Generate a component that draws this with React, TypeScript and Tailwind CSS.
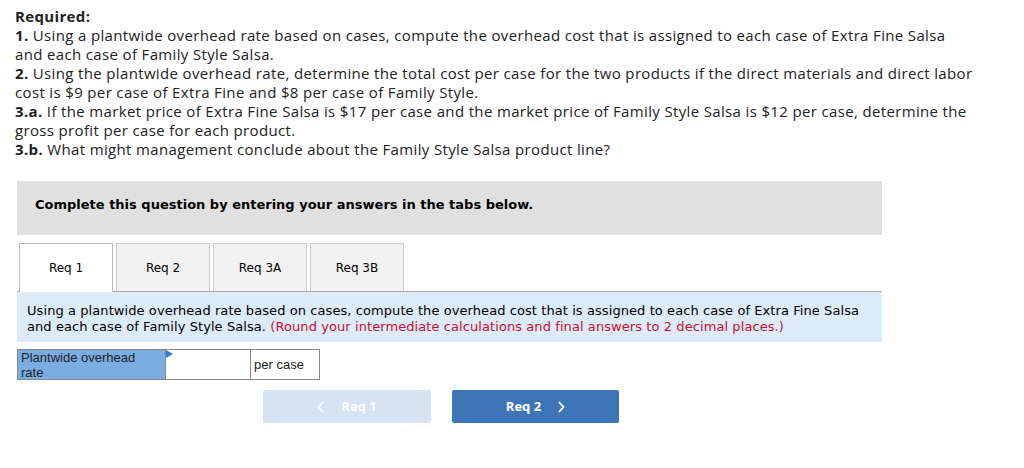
import React from "react";

const QUESTION_FONT = { fontFamily: '"Open Sans", "Liberation Sans", sans-serif' };
const VERDANA = { fontFamily: '"DejaVu Sans", Verdana, sans-serif' };
const ARIAL = { fontFamily: '"Liberation Sans", Arial, sans-serif' };

const TABS = ["Req 1", "Req 2", "Req 3A", "Req 3B"];

export default function App() {
  return (
    <div className="w-[1024px] h-[468px] bg-white text-[#222]">
      <div className="pl-[15px] pt-[7px] w-[1010px] text-[15px] leading-[19px] tracking-[0.35px]" style={QUESTION_FONT}>
        <p className="font-bold">Required:</p>
        <p>
          <b>1.</b> Using a plantwide overhead rate based on cases, compute the overhead cost that is assigned to each case of Extra Fine Salsa
          <br />
          and each case of Family Style Salsa.
        </p>
        <p>
          <b>2.</b> Using the plantwide overhead rate, determine the total cost per case for the two products if the direct materials and direct labor
          <br />
          cost is $9 per case of Extra Fine and $8 per case of Family Style.
        </p>
        <p>
          <b>3.a.</b> If the market price of Extra Fine Salsa is $17 per case and the market price of Family Style Salsa is $12 per case, determine the
          <br />
          gross profit per case for each product.
        </p>
        <p>
          <b>3.b.</b> What might management conclude about the Family Style Salsa product line?
        </p>
      </div>

      <div className="ml-[17px] mt-[22px] w-[865px]">
        {/* instructions */}
        <div className="h-[54px] bg-[#e0e0e0] flex items-center pl-[18px] pb-[6px]">
          <span className="text-[13px] font-bold text-black" style={VERDANA}>
            Complete this question by entering your answers in the tabs below.
          </span>
        </div>

        {/* tabs */}
        <div className="mt-[8px] flex gap-[3px] pl-[2px] border-b border-[#aaa] h-[49px]">
          {TABS.map((t, i) => (
            <div
              key={t}
              className={
                i === 0
                  ? "w-[94px] h-[49px] bg-white border border-b-0 border-[#bbb] flex items-center justify-center text-[12px] text-black"
                  : "w-[94px] h-[48px] bg-[#f2f2f2] border border-b-0 border-[#ccc] flex items-center justify-center text-[12px] text-black"
              }
              style={VERDANA}
            >
              {t}
            </div>
          ))}
        </div>

        {/* prompt */}
        <div className="h-[50px] bg-[#dcebf7] pl-[10px] pt-[11px] text-[13px] leading-[16px] tracking-[0.08px] text-black" style={VERDANA}>
          Using a plantwide overhead rate based on cases, compute the overhead cost that is assigned to each case of Extra Fine Salsa
          <br />
          and each case of Family Style Salsa. <span className="text-[#c8102e]">(Round your intermediate calculations and final answers to 2 decimal places.)</span>
        </div>

        {/* answer table */}
        <div className="mt-[7px] flex w-[303px] h-[31px] border border-[#888] text-[13px] leading-[15px]" style={ARIAL}>
          <div className="w-[148px] bg-[#7aade2] border-r border-[#888] pl-[3px] pr-[20px] text-[#222]">
            Plantwide overhead rate
          </div>
          <div className="relative w-[85px] border-r border-[#888] bg-white">
            <svg className="absolute left-0 top-0" width="8" height="9" viewBox="0 0 8 9">
              <path d="M0 0 L7 4 L0 8 Z" fill="#3b7ad0" />
            </svg>
          </div>
          <div className="flex-1 flex items-center pl-[3px] text-[#222] bg-white">per case</div>
        </div>

        {/* nav buttons */}
        <div className="mt-[10px] flex gap-[21px] pl-[246px]">
          <button
            className="w-[168px] h-[33px] rounded-[2px] bg-[#d7e3f1] text-white text-[13px] font-bold flex items-center justify-center gap-[16px]"
            style={QUESTION_FONT}
          >
            <svg width="8" height="12" viewBox="0 0 8 12">
              <path d="M6 1 L1.5 6 L6 11" fill="none" stroke="white" strokeWidth="1.8" />
            </svg>
            <span>Req 1</span>
          </button>
          <button
            className="w-[167px] h-[33px] rounded-[2px] bg-[#3c76b6] text-white text-[13px] font-bold flex items-center justify-center gap-[16px]"
            style={QUESTION_FONT}
          >
            <span>Req 2</span>
            <svg width="8" height="12" viewBox="0 0 8 12">
              <path d="M2 1 L6.5 6 L2 11" fill="none" stroke="white" strokeWidth="1.8" />
            </svg>
          </button>
        </div>
      </div>
    </div>
  );
}
